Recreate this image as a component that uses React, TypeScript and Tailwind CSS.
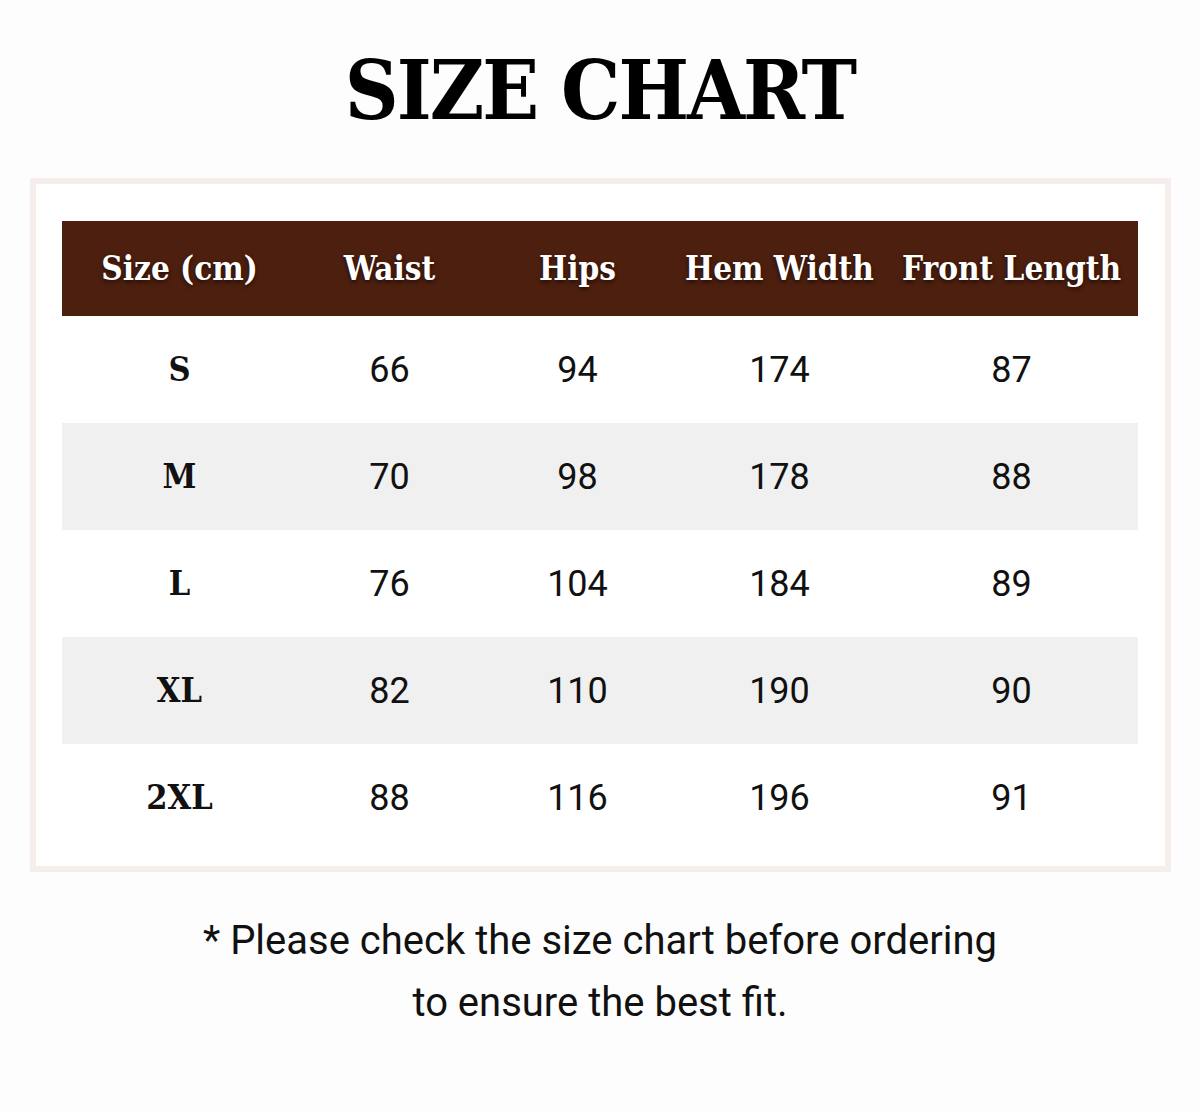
const headers = ["Size (cm)", "Waist", "Hips", "Hem Width", "Front Length"];

const rows = [
  ["S", "66", "94", "174", "87"],
  ["M", "70", "98", "178", "88"],
  ["L", "76", "104", "184", "89"],
  ["XL", "82", "110", "190", "90"],
  ["2XL", "88", "116", "196", "91"],
];

const cols = "grid grid-cols-[236px_184px_192px_212px_252px]";

export default function App() {
  return (
    <div className="w-[1200px] h-[1113px] bg-[#fdfdfd] flex flex-col items-center">
      <h1 className="mt-[44px] h-[92px] flex items-center text-[83px] tracking-[-2px] leading-none font-bold text-black font-['DejaVu_Serif_Condensed','DejaVu_Serif',serif]">
        SIZE CHART
      </h1>

      {/* Table frame */}
      <div className="mt-[42px] w-[1141px] h-[694px] border-[6px] border-[#f5eeea] bg-white pt-[37px] px-[26px]">
        <div className="w-[1076px]">
          <div className={`${cols} h-[95px] bg-[#4d1f0e] items-center`}>
            {headers.map((h) => (
              <div
                key={h}
                className="text-center text-white text-[33px] font-bold whitespace-nowrap font-['DejaVu_Serif_Condensed','DejaVu_Serif',serif] [text-shadow:0_2px_4px_rgba(0,0,0,0.6)]">
                {h}
              </div>
            ))}
          </div>

          {rows.map((r, i) => (
            <div
              key={r[0]}
              className={`${cols} h-[107px] items-center ${i % 2 === 1 ? "bg-[#f0f0f0]" : "bg-white"}`}>
              {r.map((c, j) => (
                <div
                  key={j}
                  className={
                    j === 0
                      ? "text-center text-[34px] font-bold text-[#111] font-['DejaVu_Serif_Condensed','DejaVu_Serif',serif]"
                      : "text-center text-[36px] text-[#111] font-['Roboto',sans-serif]"
                  }>
                  {c}
                </div>
              ))}
            </div>
          ))}
        </div>
      </div>

      <p className="mt-[38px] text-center text-[40px] leading-[62px] text-[#111] font-['Roboto',sans-serif]">
        * Please check the size chart before ordering
        <br />
        to ensure the best fit.
      </p>
    </div>
  );
}
